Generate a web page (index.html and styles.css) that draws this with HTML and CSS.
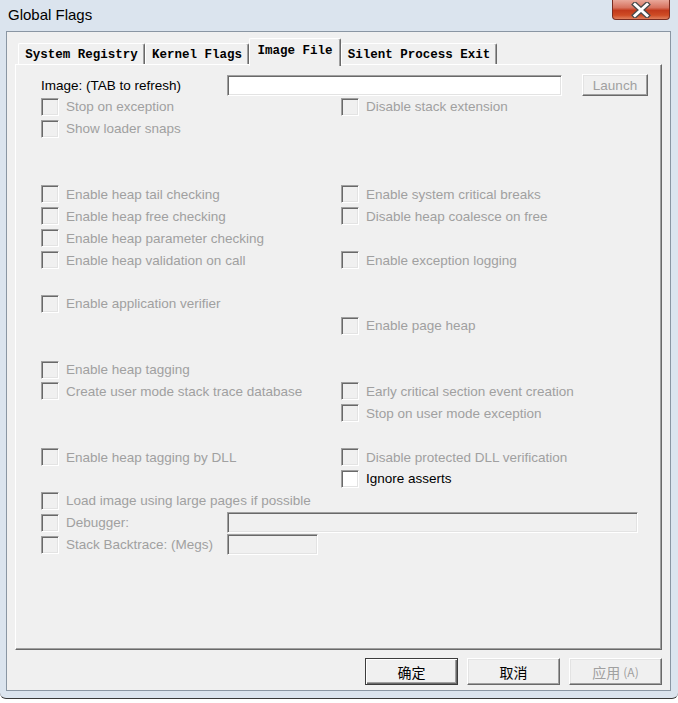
FILE: index.html
```html
<!DOCTYPE html>
<html>
<head>
<meta charset="utf-8">
<title>Global Flags</title>
<link rel="stylesheet" href="styles.css">
</head>
<body>
<div class="window">
  <div class="titlebar">
    <div class="title">Global Flags</div>
    <div class="close">
      <svg width="22" height="16" viewBox="0 0 22 16">
        <path d="M5 2.5 L17 13.5 M17 2.5 L5 13.5" stroke="#4a4a4a" stroke-width="5.5" stroke-linecap="square" fill="none"/>
        <path d="M5 2.5 L17 13.5 M17 2.5 L5 13.5" stroke="#ffffff" stroke-width="3" stroke-linecap="square" fill="none"/>
      </svg>
    </div>
  </div>
  <div class="client">
    <div class="tabs">
      <div class="tab t1">System Registry</div>
      <div class="tab t2">Kernel Flags</div>
      <div class="tab t3 selected">Image File</div>
      <div class="tab t4">Silent Process Exit</div>
    </div>
    <div class="panel">
      <div class="rows">
        <div class="row">
          <div class="label dark">Image: (TAB to refresh)</div>
          <div class="imgctl">
            <div class="field image-field"></div>
            <div class="launch">Launch</div>
          </div>
        </div>
        <div class="row">
          <div class="left cb"><span class="box"></span>Stop on exception</div>
          <div class="right cb"><span class="box"></span>Disable stack extension</div>
        </div>
        <div class="row">
          <div class="left cb"><span class="box"></span>Show loader snaps</div>
        </div>
        <div class="row"></div>
        <div class="row"></div>
        <div class="row">
          <div class="left cb"><span class="box"></span>Enable heap tail checking</div>
          <div class="right cb"><span class="box"></span>Enable system critical breaks</div>
        </div>
        <div class="row">
          <div class="left cb"><span class="box"></span>Enable heap free checking</div>
          <div class="right cb"><span class="box"></span>Disable heap coalesce on free</div>
        </div>
        <div class="row">
          <div class="left cb"><span class="box"></span>Enable heap parameter checking</div>
        </div>
        <div class="row">
          <div class="left cb"><span class="box"></span>Enable heap validation on call</div>
          <div class="right cb"><span class="box"></span>Enable exception logging</div>
        </div>
        <div class="row"></div>
        <div class="row">
          <div class="left cb"><span class="box"></span>Enable application verifier</div>
        </div>
        <div class="row">
          <div class="right cb"><span class="box"></span>Enable page heap</div>
        </div>
        <div class="row"></div>
        <div class="row">
          <div class="left cb"><span class="box"></span>Enable heap tagging</div>
        </div>
        <div class="row">
          <div class="left cb"><span class="box"></span>Create user mode stack trace database</div>
          <div class="right cb"><span class="box"></span>Early critical section event creation</div>
        </div>
        <div class="row">
          <div class="right cb"><span class="box"></span>Stop on user mode exception</div>
        </div>
        <div class="row"></div>
        <div class="row">
          <div class="left cb"><span class="box"></span>Enable heap tagging by DLL</div>
          <div class="right cb"><span class="box"></span>Disable protected DLL verification</div>
        </div>
        <div class="row">
          <div class="right cb enabled"><span class="box white"></span>Ignore asserts</div>
        </div>
        <div class="row">
          <div class="left cb"><span class="box"></span>Load image using large pages if possible</div>
        </div>
        <div class="row">
          <div class="first cb"><span class="box"></span>Debugger:</div>
          <div class="field wide disabled"></div>
        </div>
        <div class="row">
          <div class="first cb"><span class="box"></span>Stack Backtrace: (Megs)</div>
          <div class="field small disabled"></div>
        </div>
      </div>
    </div>
    <div class="actions">
      <div class="btn default">确定</div>
      <div class="btn">取消</div>
      <div class="btn off">应用<span class="acc">(A)</span></div>
    </div>
  </div>
</div>
</body>
</html>
```

FILE: styles.css
```css
* { box-sizing: border-box; }

body {
  margin: 0;
  width: 678px;
  height: 703px;
  overflow: hidden;
  background: #ffffff;
  font-family: "Liberation Sans", Arial, sans-serif;
  font-size: 13.5px;
}

.window {
  height: 699px;
  background: #dbe4ee;
  border-bottom: 1px solid #3a3a3a;
  border-radius: 0 0 6px 6px;
  display: flex;
  flex-direction: column;
}

.titlebar {
  height: 31px;
  display: flex;
  justify-content: space-between;
  align-items: flex-start;
}

.title {
  padding: 6px 0 0 8px;
  font-size: 15px;
  color: #000;
}

.close {
  width: 58px;
  height: 20px;
  margin-right: 8px;
  background: linear-gradient(#e9a89a 0%, #d7735f 40%, #c23a1c 55%, #cf4c25 80%, #e0805e 100%);
  border: 1px solid #7a2e22;
  border-top: none;
  border-radius: 0 0 4px 4px;
  display: flex;
  align-items: center;
  justify-content: center;
}

.client {
  margin: 0 7px 0 6px;
  height: 660px;
  background: #f0f0f0;
  border: 1px solid #8a96a3;
  padding: 6px 8px 0 8px;
}

.tabs {
  display: flex;
  align-items: flex-end;
  height: 26px;
  padding-left: 3px;
  position: relative;
  z-index: 1;
}

.tab {
  height: 21px;
  background: #f0f0f0;
  border-top: 1px solid #ffffff;
  border-left: 1px solid #ffffff;
  border-right: 1px solid #696969;
  box-shadow: inset -1px 0 #a0a0a0;
  border-radius: 2px 2px 0 0;
  font-family: "Liberation Mono", "Courier New", monospace;
  font-weight: bold;
  font-size: 12.5px;
  color: #000;
  display: flex;
  align-items: center;
  justify-content: center;
  padding-top: 1px;
}

.t1 { width: 127px; }
.t2 { width: 104px; }
.t3 { width: 92px; }
.t4 { width: 156px; }

.tab.selected {
  height: 28px;
  margin-bottom: -2px;
  align-items: flex-start;
  padding-top: 5px;
}

.panel {
  height: 586px;
  border-top: 1px solid #ffffff;
  border-left: 1px solid #ffffff;
  border-right: 1px solid #696969;
  border-bottom: 1px solid #696969;
  box-shadow: inset -1px -1px #a0a0a0;
  padding: 9px 0 0 25px;
}

.rows {
  display: flex;
  flex-direction: column;
}

.row {
  height: 21.9px;
  display: grid;
  grid-template-columns: 186px 114px 307px;
  align-items: center;
}

.left { grid-column: 1 / 3; }
.right { grid-column: 3; }
.first { grid-column: 1; }

.label { grid-column: 1; white-space: nowrap; }
.dark { color: #000; }

.cb {
  display: flex;
  align-items: center;
  gap: 7px;
  color: #a0a0a0;
  white-space: nowrap;
}

.cb.enabled { color: #000; }

.box {
  width: 18px;
  height: 18px;
  flex: none;
  background: #f0f0f0;
  border-top: 1px solid #a0a0a0;
  border-left: 1px solid #a0a0a0;
  border-right: 1px solid #ffffff;
  border-bottom: 1px solid #ffffff;
  box-shadow: inset 1px 1px #696969, inset -1px -1px #e3e3e3;
}

.box.white { background: #ffffff; }

.imgctl {
  grid-column: 2 / 4;
  display: flex;
  align-items: center;
  gap: 20px;
}

.field {
  height: 21px;
  background: #ffffff;
  border-top: 1px solid #a0a0a0;
  border-left: 1px solid #a0a0a0;
  border-right: 1px solid #ffffff;
  border-bottom: 1px solid #ffffff;
  box-shadow: inset 1px 1px #696969, inset -1px -1px #e3e3e3;
}

.field.disabled { background: #f0f0f0; }

.image-field { width: 335px; }

.wide {
  grid-column: 2 / 4;
  width: 411px;
}

.small {
  grid-column: 2;
  width: 91px;
}

.launch {
  width: 66px;
  height: 22px;
  background: #f0f0f0;
  border: 1px solid;
  border-color: #ffffff #696969 #696969 #ffffff;
  box-shadow: inset -1px -1px #a0a0a0, inset 1px 1px #e3e3e3;
  color: #a0a0a0;
  display: flex;
  align-items: center;
  justify-content: center;
}

.actions {
  display: flex;
  justify-content: flex-end;
  gap: 9px;
  margin-top: 8px;
}

.btn {
  width: 93px;
  height: 27px;
  background: #f0f0f0;
  border: 1px solid;
  border-color: #ffffff #696969 #696969 #ffffff;
  box-shadow: inset -1px -1px #a0a0a0, inset 1px 1px #e3e3e3;
  font-family: "Noto Sans CJK SC", sans-serif;
  font-size: 14px;
  color: #000;
  display: flex;
  align-items: center;
  justify-content: center;
}

.btn.default {
  border-color: #3c3c3c;
  box-shadow: inset 1px 1px #ffffff, inset -1px -1px #696969, inset -2px -2px #a0a0a0;
}

.btn.off { color: #a0a0a0; }

.acc {
  font-size: 12px;
  margin-left: 3px;
}
```
